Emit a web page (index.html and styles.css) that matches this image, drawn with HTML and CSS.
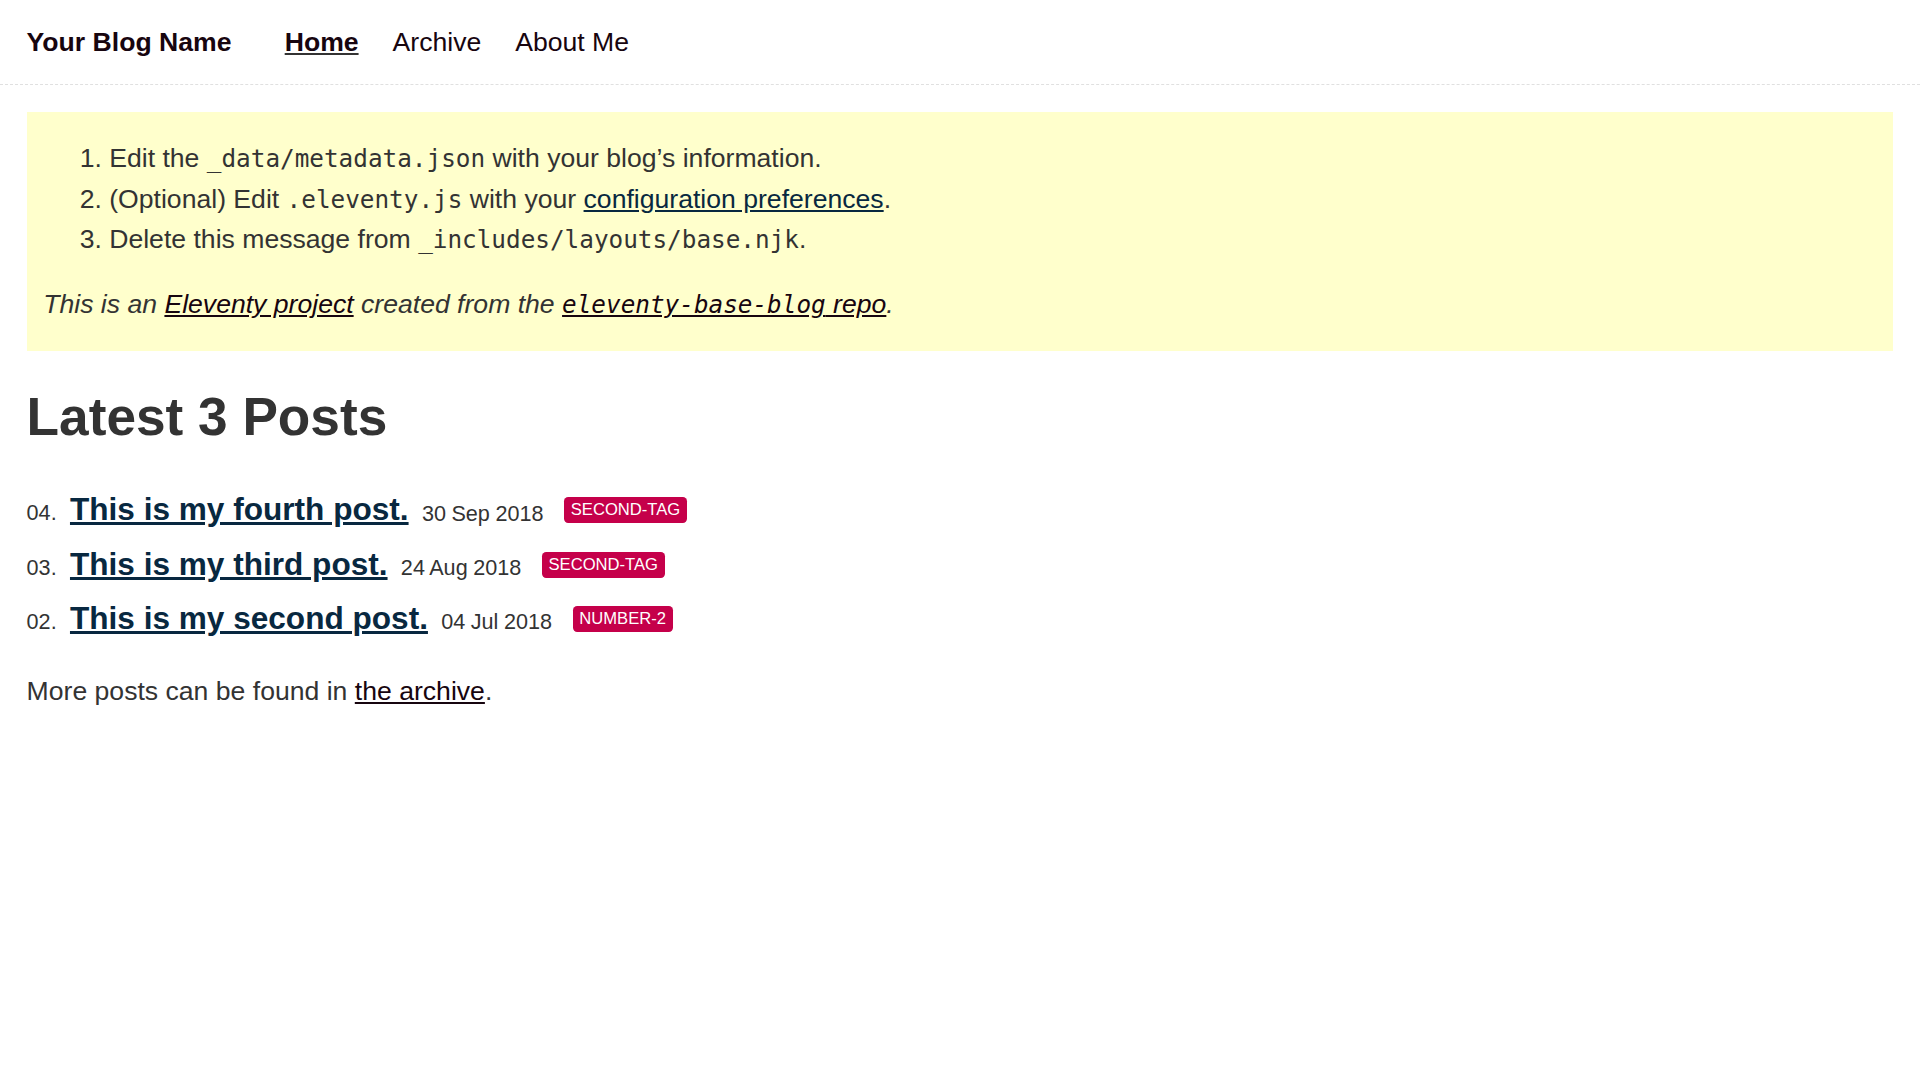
FILE: index.html
```html
<!DOCTYPE html>
<html lang="en">
<head>
    <meta charset="UTF-8">
    <meta name="viewport" content="width=device-width, initial-scale=1.0">
    <title>Your Blog Name</title>
    <link rel="stylesheet" href="styles.css">
</head>
<body>
    <header class="site-header">
        <h1 class="home"><a href="#" class="seen">Your Blog Name</a></h1>
        <ul class="nav">
            <li class="nav-item nav-item-active"><a href="#" class="seen">Home</a></li>
            <li class="nav-item"><a href="#" class="seen">Archive</a></li>
            <li class="nav-item"><a href="#" class="seen">About Me</a></li>
        </ul>
    </header>

    <main class="tmpl-home">
        <div class="warning">
            <ol>
                <li>Edit the <code>_data/metadata.json</code> with your blog’s information.</li>
                <li>(Optional) Edit <code>.eleventy.js</code> with your <a href="#">configuration preferences</a>.</li>
                <li>Delete this message from <code>_includes/layouts/base.njk</code>.</li>
            </ol>
            <p><em>This is an <a href="#" class="seen">Eleventy project</a> created from the <a href="#" class="seen"><code>eleventy-base-blog</code> repo</a>.</em></p>
        </div>

        <h1>Latest 3 Posts</h1>

        <ol class="postlist">
            <li class="postlist-item">
                <a href="#" class="postlist-link">This is my fourth post.</a>
                <time class="postlist-date">30 Sep 2018</time>
                <a href="#" class="tag">second-tag</a>
            </li>
            <li class="postlist-item">
                <a href="#" class="postlist-link">This is my third post.</a>
                <time class="postlist-date">24 Aug 2018</time>
                <a href="#" class="tag">second-tag</a>
            </li>
            <li class="postlist-item">
                <a href="#" class="postlist-link">This is my second post.</a>
                <time class="postlist-date">04 Jul 2018</time>
                <a href="#" class="tag">number-2</a>
            </li>
        </ol>

        <p>More posts can be found in <a href="#" class="seen">the archive</a>.</p>
    </main>
</body>
</html>
```

FILE: styles.css
```css
:root {
    --red: #c5004a;
    --lightgray: #e0e0e0;
    --darkgray: #333;
    --navy: #17050f;
    --blue: #082840;
    --white: #fff;
}
* {
    box-sizing: border-box;
}
html {
    font-size: 26.6px;
}
html, body {
    margin: 0;
    padding: 0;
    font-family: "Liberation Sans", Arial, sans-serif;
    color: var(--darkgray);
    background-color: var(--white);
}
p {
    line-height: 1.45;
    max-width: 37.5em;
}
p:last-child {
    margin-bottom: 0;
}
a {
    color: var(--blue);
}
a.seen {
    color: var(--navy);
}
code {
    font-family: "DejaVu Sans Mono", monospace;
    font-size: 0.915em;
}

/* header */
.site-header {
    display: flex;
    align-items: flex-start;
    border-bottom: 1px dashed var(--lightgray);
}
.home {
    margin: 1rem 0;
    padding: 0 1rem;
    font-size: 1em;
}
.home a {
    text-decoration: none;
}
.nav {
    list-style: none;
    margin: 1em 0 1em 1em;
    padding: 0;
}
.nav-item {
    display: inline-block;
    margin-right: 1em;
}
.nav-item a {
    text-decoration: none;
}
.nav-item-active {
    font-weight: 700;
    text-decoration: underline;
}

main {
    padding: 1rem;
}

/* warning box */
.warning {
    background-color: #ffc;
    padding: 1em 0.625em;
}
.warning ol {
    margin: 0 0 1em;
    padding-left: 66px;
}
.warning li {
    line-height: 1.51;
}

/* posts */
.postlist {
    list-style: none;
    padding: 0;
    counter-reset: start-from 5;
}
.postlist-item {
    counter-increment: start-from -1;
}
.postlist-item:before {
    display: inline-block;
    content: counter(start-from, decimal-leading-zero) ".";
    line-height: 100%;
}
.postlist-date, .postlist-item:before {
    font-size: 0.8125em;
    color: var(--darkgray);
}
.postlist-date {
    word-spacing: -0.5px;
}
.postlist-link {
    display: inline-block;
    padding: 0.272em 0.1875em;
    font-size: 1.1875em;
    font-weight: 700;
}

.tag {
    display: inline-block;
    vertical-align: text-top;
    text-transform: uppercase;
    font-size: 0.625em;
    padding: 3px 6.6px;
    margin: 1px 0 0 0.8em;
    background-color: var(--red);
    color: var(--white);
    border-radius: 0.25em;
    text-decoration: none;
}
```
